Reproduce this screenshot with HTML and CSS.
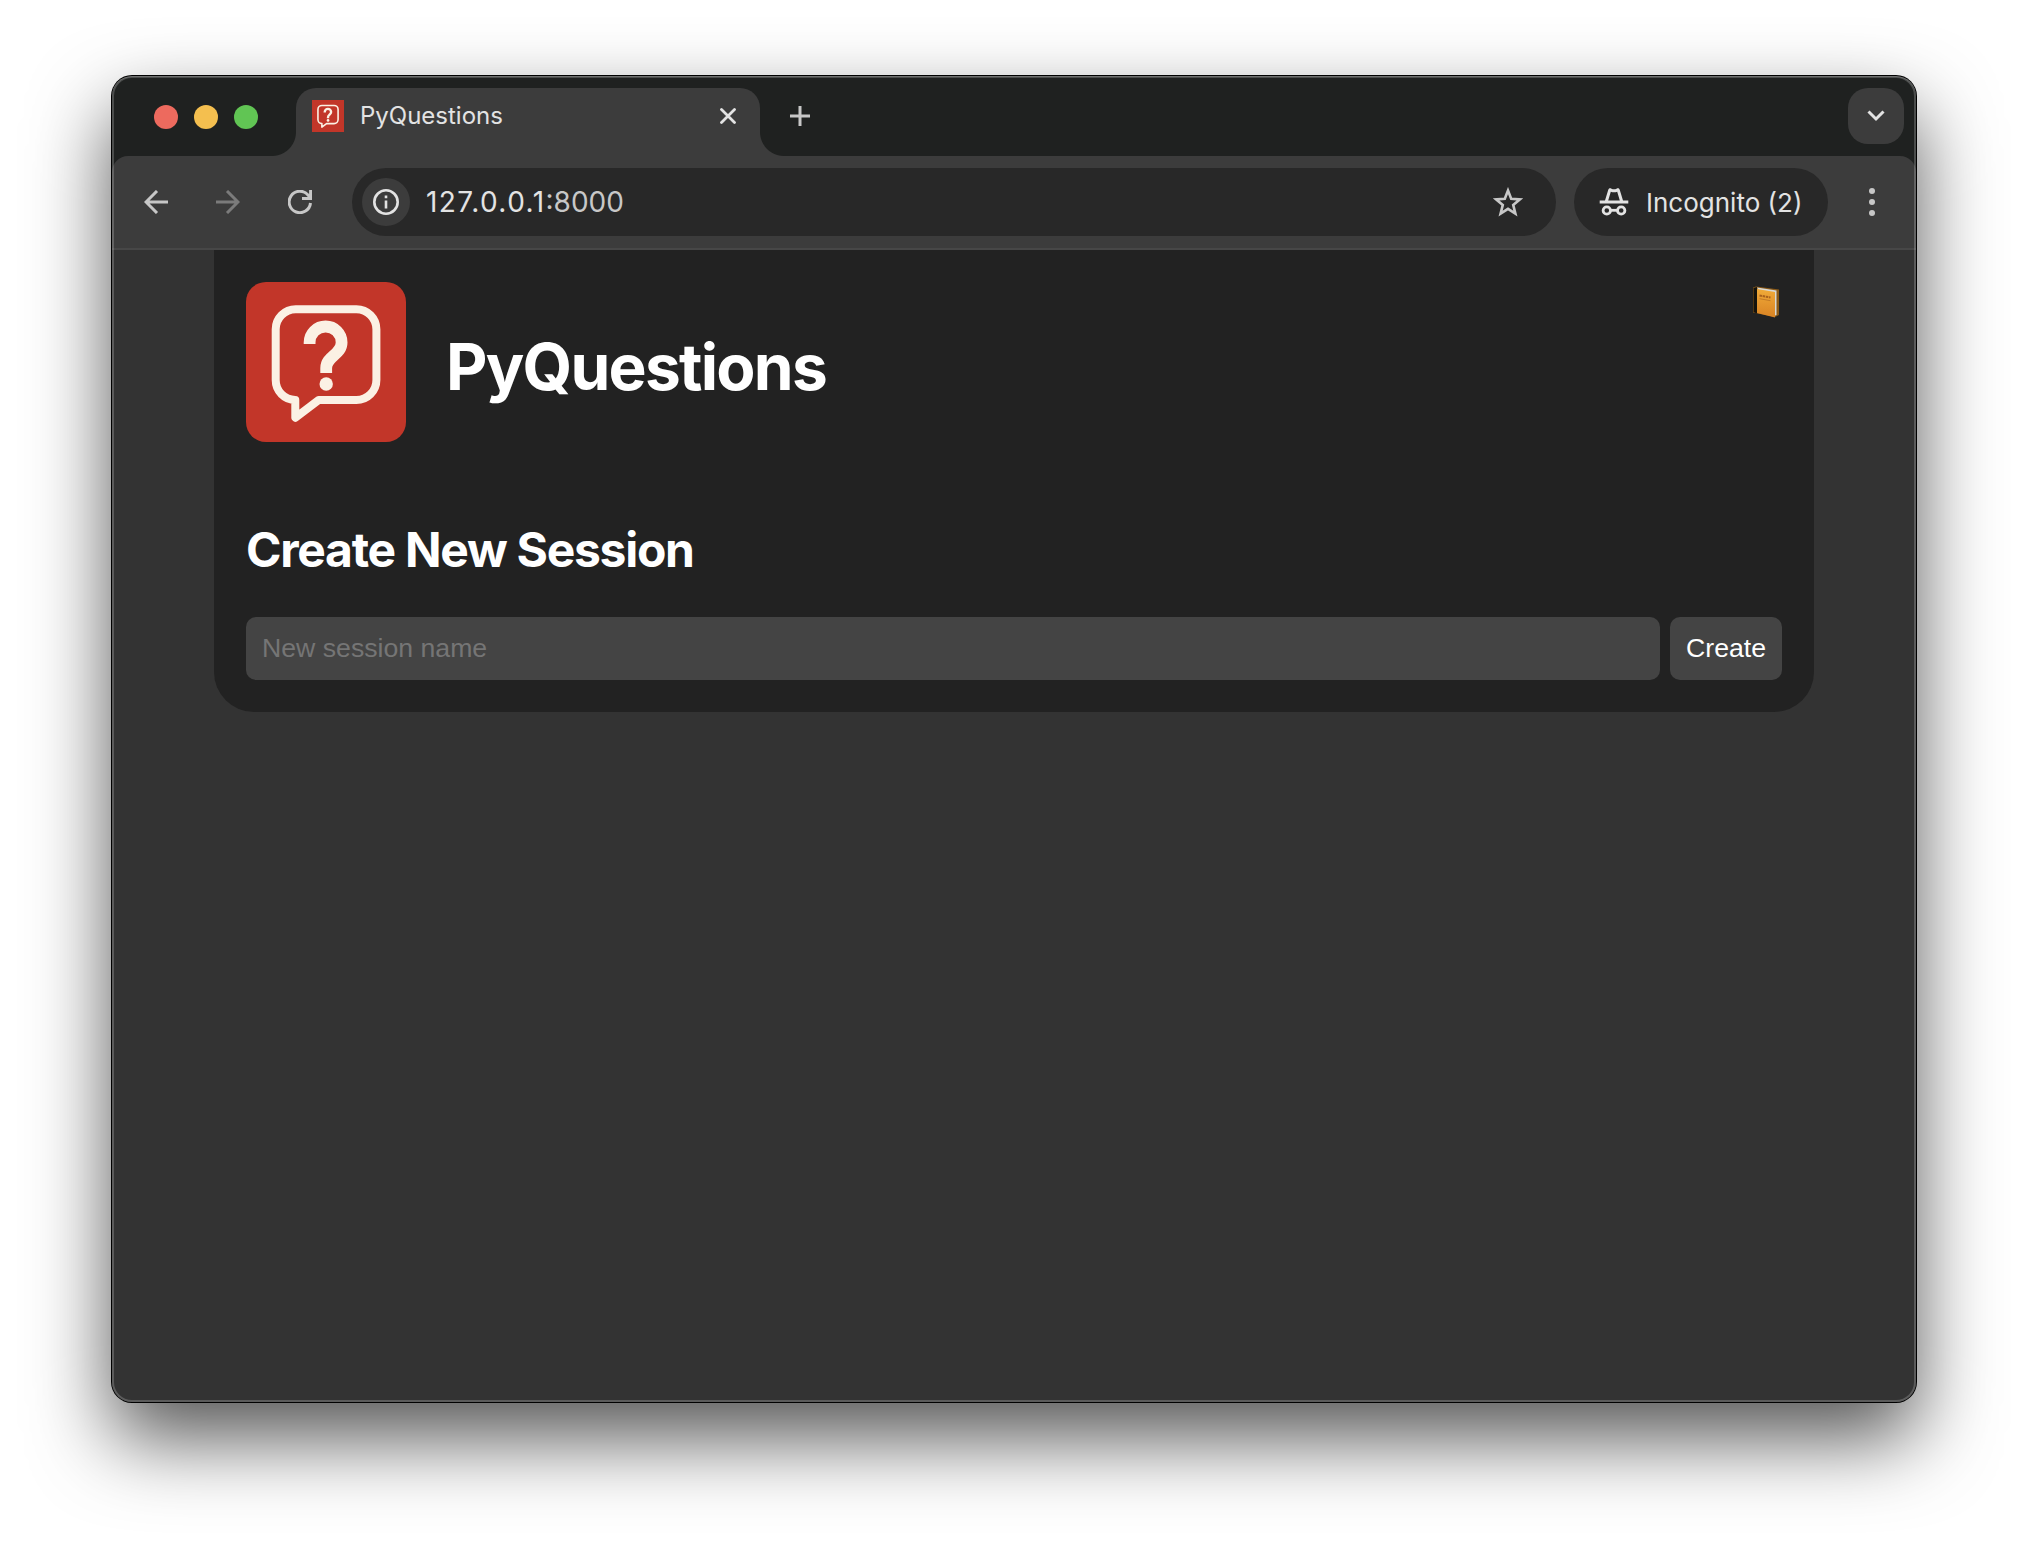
FILE: index.html
```html
<!DOCTYPE html>
<html lang="en">
<head>
<meta charset="utf-8">
<title>PyQuestions</title>
<link rel="stylesheet" href="styles.css">
</head>
<body>
<svg class="defs" aria-hidden="true">
  <symbol id="logo" viewBox="0 0 160 160">
    <rect width="160" height="160" fill="#c23629"/>
    <g fill="none" stroke="#fbf1e4" stroke-linejoin="round">
      <path stroke-width="8" d="M49.300 118A19.600 20 0 0 1 29.700 98V47.300a20 20 0 0 1 20-20h60.700a20 20 0 0 1 20 20V98a20 20 0 0 1-20 20H72.700L49.300 135.700Z"/>
      <path stroke-width="11.800" d="M63.600 62v-1.500a16 16 0 0 1 32 0C95.600 73 80.200 74 80.200 86v5"/>
    </g>
    <circle cx="80.200" cy="102" r="6.700" fill="#fbf1e4"/>
  </symbol>
</svg>
<div class="window">
  <div class="tabstrip">
    <div class="lights"><i class="red"></i><i class="yellow"></i><i class="green"></i></div>
    <div class="tab">
      <svg class="favicon"><use href="#logo"/></svg>
      <span class="tab-title">PyQuestions</span>
      <svg class="close" viewBox="0 0 16 16"><path d="M1.500 1.500l13 13M14.500 1.500l-13 13"/></svg>
    </div>
    <svg class="plus" viewBox="0 0 20 20"><path d="M10 0v20M0 10h20"/></svg>
    <div class="tab-search"><svg viewBox="0 0 18 12"><path d="M1.500 1.500L9 9l7.500-7.500"/></svg></div>
  </div>
  <div class="toolbar">
    <svg class="nav" viewBox="0 0 24 24"><path d="M24 12H2M13 1L2 12l11 11"/></svg>
    <svg class="nav dim" viewBox="0 0 24 24"><path d="M0 12h22M11 1l11 11-11 11"/></svg>
    <svg class="nav" viewBox="0 0 24 24"><path d="M22.500 13A10.700 10.700 0 1 1 20 5l2.500 3.500M22.600 0v8.500H14"/></svg>
    <div class="omnibox">
      <div class="info"><svg viewBox="0 0 26 26"><circle cx="13" cy="13" r="11.700"/><path d="M13 11.500v8M13 6.500v2.700"/></svg></div>
      <span class="url"><span class="host">127.0.0.1</span><span class="port">:8000</span></span>
      <svg class="star" viewBox="0 0 30 30"><path d="M15 3.500l3.200 8.300 8.600.6-6.600 5.500 2.200 8.700L15 21.900l-7.400 4.700 2.200-8.700-6.600-5.500 8.600-.6z"/></svg>
    </div>
    <div class="incognito">
      <svg viewBox="0 0 30 28"><path class="solid" d="M6 12.500L9.200 2C9.700.2 11 0 12.500.7c1.500.7 3.500.7 5 0C19 0 20.300.2 20.800 2L24 12.500h5.300v3H.7v-3z"/><path class="hole" d="M9.200 12.500L11.800 3.700q3.200 1.300 6.400 0l2.600 8.800z"/><circle cx="7.800" cy="22.500" r="3.700"/><circle cx="22.200" cy="22.500" r="3.700"/><path class="line" d="M11 22.300h8"/></svg>
      <span>Incognito (2)</span>
    </div>
    <svg class="menu" viewBox="0 0 6 28"><circle cx="3" cy="3" r="3"/><circle cx="3" cy="14" r="3"/><circle cx="3" cy="25" r="3"/></svg>
  </div>
  <main class="page">
    <div class="card">
      <header>
        <svg class="logo"><use href="#logo"/></svg>
        <h1>PyQuestions</h1>
        <svg class="book" viewBox="0 0 26 32"><defs><linearGradient id="cover" x2="0" y2="1"><stop stop-color="#f0aa38"/><stop offset="1" stop-color="#d98324"/></linearGradient></defs><path fill="#8a5a18" d="M0 1.500L3 .500 26 3.500V29l-4 2L0 26.500z"/><path fill="#15130c" d="M.500 2L4 1v26.500L.500 26z"/><path fill="#d8d8d4" d="M4 1.500l19.500 3V29L21 30z"/><path fill="url(#cover)" d="M4 3l18 3v25.500L4 27z"/><path stroke="#a9611c" stroke-width="2" stroke-dasharray="2.500 .7" d="M6.500 9.500l11 2"/><path stroke="#c27a26" d="M6.500 12.700l11 2"/></svg>
      </header>
      <h2>Create New Session</h2>
      <form>
        <input type="text" placeholder="New session name">
        <button type="button">Create</button>
      </form>
    </div>
  </main>
</div>
</body>
</html>
```
FILE: styles.css
```css
* { box-sizing: border-box; }
body {
  margin: 0;
  height: 1550px;
  padding: 76px 112px 148px;
  background: #fff;
  font-family: Inter, "Liberation Sans", sans-serif;
  overflow: hidden;
}
svg { display: block; flex: none; fill: none; }
.defs { position: absolute; width: 0; height: 0; }

.window {
  position: relative;
  display: flex;
  flex-direction: column;
  height: 1326px;
  border-radius: 20px;
  background: #1f2120;
  box-shadow: 0 0 0 1px #000, 0 36px 80px rgba(0, 0, 0, .67);
}
.window::after {
  content: "";
  position: absolute;
  inset: 0;
  border-radius: 20px;
  box-shadow: inset 0 0 0 2px rgba(255, 255, 255, .2), inset 0 1px 0 rgba(255, 255, 255, .2);
  pointer-events: none;
}

.tabstrip { display: flex; align-items: flex-start; height: 80px; padding: 12px 12px 0 42px; }
.lights { display: flex; gap: 16px; margin: 17px 38px 0 0; }
.lights i { width: 24px; height: 24px; border-radius: 50%; }
.red { background: #ed6a5e; }
.yellow { background: #f4bf4f; }
.green { background: #61c554; }
.tab {
  position: relative;
  display: flex;
  align-items: center;
  width: 464px;
  height: 68px;
  padding: 0 24px 12px 16px;
  border-radius: 20px 20px 0 0;
  background: #3c3c3c;
}
.tab::before, .tab::after {
  content: "";
  position: absolute;
  bottom: 0;
  width: 24px;
  height: 24px;
}
.tab::before { right: 100%; background: radial-gradient(circle at 0 0, transparent 23.5px, #3c3c3c 24.5px); }
.tab::after { left: 100%; background: radial-gradient(circle at 100% 0, transparent 23.5px, #3c3c3c 24.5px); }
.favicon { width: 32px; height: 32px; }
.tab-title { flex: 1; margin-left: 16px; font-size: 24px; line-height: 32px; color: #e3e3e3; }
.close { width: 16px; height: 16px; stroke: #e3e3e3; stroke-width: 2.8; stroke-linecap: round; }
.plus { width: 20px; height: 20px; margin: 18px 0 0 30px; stroke: #c7c7c7; stroke-width: 3; }
.tab-search {
  display: flex;
  align-items: center;
  justify-content: center;
  width: 56px;
  height: 56px;
  margin-left: auto;
  border-radius: 20px;
  background: #3c3c3c;
}
.tab-search svg { width: 18px; height: 12px; stroke: #e3e3e3; stroke-width: 3; }

.toolbar {
  display: flex;
  align-items: center;
  height: 94px;
  padding: 0 41px 0 32px;
  border-bottom: 2px solid #474747;
  border-radius: 16px 16px 0 0;
  background: #3c3c3c;
}
.nav { width: 24px; height: 24px; margin-right: 48px; stroke: #c7c7c7; stroke-width: 3; }
.nav.dim { stroke: #7b7b7b; }
.omnibox, .incognito { display: flex; align-items: center; height: 68px; border-radius: 34px; background: #282828; }
.omnibox { width: 1204px; margin-left: -8px; padding: 0 33px 0 10px; }
.info { display: flex; align-items: center; justify-content: center; width: 48px; height: 48px; border-radius: 50%; background: #3c3c3c; }
.info svg { width: 26px; height: 26px; stroke: #e3e3e3; stroke-width: 2.6; }
.url { flex: 1; margin-left: 16px; font-size: 28px; line-height: 36px; color: #e3e3e3; }
.host { letter-spacing: 1.45px; }
.port { color: #c7c7c7; }
.star { width: 30px; height: 30px; stroke: #c7c7c7; stroke-width: 2.6; }
.incognito { width: 254px; margin-left: 18px; padding-left: 25px; font-size: 26px; color: #e3e3e3; white-space: nowrap; }
.incognito svg { width: 30px; height: 28px; margin-right: 17px; stroke: #e3e3e3; stroke-width: 2.8; }
.incognito .solid { fill: #e3e3e3; stroke: none; }
.incognito .hole { fill: #282828; stroke: none; }
.menu { width: 6px; height: 28px; margin-left: auto; fill: #c7c7c7; }

.page { flex: 1; padding: 0 102px; border-radius: 0 0 20px 20px; background: #333; }
.card { height: 462px; padding: 32px; border-radius: 0 0 40px 40px; background: #222; color: #fff; }
header { display: flex; align-items: flex-start; height: 160px; }
.logo { width: 160px; height: 160px; border-radius: 20px; }
h1 { margin: 46px 0 0 40px; font-size: 64px; line-height: 78px; font-weight: 700; letter-spacing: -1.75px; }
.book { width: 26px; height: 32px; margin: 4px 3px 0 auto; }
h2 { margin: 79px 0 0; font-size: 48px; line-height: 58px; font-weight: 700; letter-spacing: -1.28px; }
form { display: flex; gap: 10px; margin-top: 38px; }
input, button {
  height: 63px;
  padding: 0 16px 1px;
  border: 0;
  border-radius: 10px;
  background: #444;
  color: #fff;
  font: 26.67px "Liberation Sans", Arial, sans-serif;
}
input { flex: 1; min-width: 0; }
input::placeholder { color: #757575; }
button { width: 112px; }
```
